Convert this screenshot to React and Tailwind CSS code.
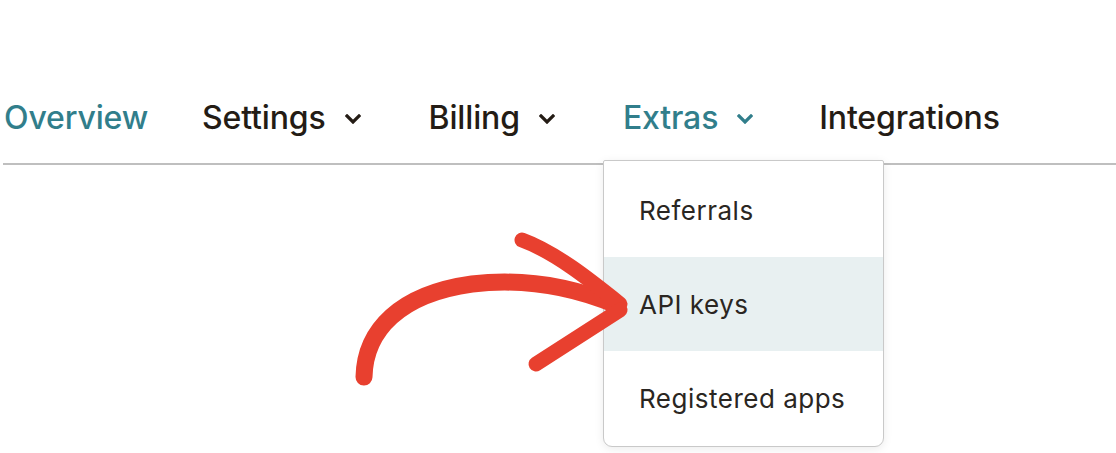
import React from 'react';

function Chevron({ color }) {
  return (
    <svg width="16" height="10" viewBox="0 0 16 10" className="ml-[19px] mr-[12px] mt-[2px]">
      <polyline points="2,2 8,8 14,2" fill="none" stroke={color} strokeWidth="3.2" strokeLinecap="square" />
    </svg>
  );
}

const menu = [
  { label: 'Referrals' },
  { label: 'API keys', active: true },
  { label: 'Registered apps' },
];

export default function App() {
  return (
    <div className="relative w-[1116px] h-[453px] bg-white overflow-hidden" style={{ fontFamily: 'Inter, "Liberation Sans", sans-serif' }}>
      {/* top nav */}
      <nav className="flex items-center h-[48px] mt-[94px] ml-[4px] text-[32px] font-medium tracking-[-0.15px] text-[#241c15]">
        <span className="text-[#317e8b]">Overview</span>
        <div className="flex items-center ml-[54px]">
          <span>Settings</span>
          <Chevron color="#241c15" />
        </div>
        <div className="flex items-center ml-[56px]">
          <span>Billing</span>
          <Chevron color="#241c15" />
        </div>
        <div className="flex items-center ml-[56px] text-[#317e8b]">
          <span>Extras</span>
          <Chevron color="#317e8b" />
        </div>
        <span className="ml-[54px]">Integrations</span>
      </nav>
      <div className="h-[2px] bg-[#bfbfbf] ml-[3px] mt-[21px]" />

      {/* dropdown */}
      <div className="absolute left-[603px] top-[160px] w-[281px] h-[287px] bg-white border-[1.5px] border-[#c9c9c9] rounded-b-[9px] rounded-t-[2px] shadow-[0_2px_10px_rgba(0,0,0,0.08)] flex flex-col pt-[2px]">
        {menu.map((m) => (
          <div
            key={m.label}
            className={`h-[94px] flex items-center pl-[35px] text-[26px] tracking-[0.5px] text-[#2a2622] ${m.active ? 'bg-[#e8f0f1]' : ''}`}
          >
            {m.label}
          </div>
        ))}
      </div>

      {/* red hand-drawn arrow */}
      <svg className="absolute left-0 top-0" width="1116" height="453" viewBox="0 0 1116 453">
        <g fill="none" stroke="#e8402f" strokeLinecap="round" strokeLinejoin="round">
          <path d="M364 377 C365 330 400 294 472 284 C532 277 580 290 616 305" strokeWidth="17" />
          <path d="M522 240 C555 252 590 280 620 304" strokeWidth="15" />
          <path d="M536 364 L620 310" strokeWidth="15" />
        </g>
      </svg>
    </div>
  );
}
